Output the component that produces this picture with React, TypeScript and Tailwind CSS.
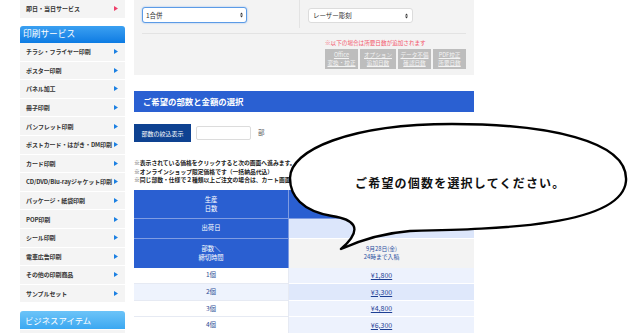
import React from "react";

const sideItems = [
  "チラシ・フライヤー印刷",
  "ポスター印刷",
  "パネル加工",
  "冊子印刷",
  "パンフレット印刷",
  "ポストカード・はがき・DM印刷",
  "カード印刷",
  "CD/DVD/Blu-rayジャケット印刷",
  "パッケージ・紙袋印刷",
  "POP印刷",
  "シール印刷",
  "電車広告印刷",
  "その他の印刷商品",
  "サンプルセット",
];

function Tri({ color }: { color: string }) {
  return (
    <svg width="4" height="5" viewBox="0 0 4 5">
      <path d="M0 0 L4 2.5 L0 5 Z" fill={color} />
    </svg>
  );
}

function UpDown() {
  return (
    <svg width="3" height="6" viewBox="0 0 3 6">
      <path d="M0 2.4 L1.5 0.4 L3 2.4 Z M0 3.6 L1.5 5.6 L3 3.6 Z" fill="#333" />
    </svg>
  );
}

function Select({ text, focused }: { text: string; focused?: boolean }) {
  return (
    <div
      className={
        focused
          ? "flex h-[16px] w-[105px] items-center justify-between rounded-[3px] border-[1.5px] border-[#5b9be6] bg-white pl-[3px] pr-[3px] shadow-[0_0_2px_#8db8ee]"
          : "flex h-[15px] w-[105px] items-center justify-between rounded-[3px] border border-[#dcdcdc] bg-white pl-[4px] pr-[4px]"
      }
    >
      <span className="text-[6.5px] leading-none text-[#333]">{text}</span>
      <UpDown />
    </div>
  );
}

const prices = [
  { n: "1個", p: "¥1,800", l: "bg-white", r: "bg-[#edf2fd]" },
  { n: "2個", p: "¥3,300", l: "bg-[#eef3fd]", r: "bg-[#dfe8fb]" },
  { n: "3個", p: "¥4,800", l: "bg-white", r: "bg-[#edf2fd]" },
  { n: "4個", p: "¥6,300", l: "bg-white", r: "bg-[#edf2fd]" },
];

export default function App() {
  return (
    <div className="relative h-[333px] w-[630px] overflow-hidden bg-white font-['Noto_Sans_CJK_JP','Noto_Sans',sans-serif]">
      <div className="flex pl-[20px]">
        {/* Sidebar */}
        <div className="flex w-[105px] flex-col">
          <div className="flex h-[18px] items-center justify-between bg-[#f4f4f4] pb-[1px] pl-[6px] pr-[7px]">
            <span className="text-[6px] font-bold text-[#333]">即日・当日サービス</span>
            <Tri color="#ee3f6a" />
          </div>
          <div className="mt-[8px] flex h-[17px] items-center rounded-t-[3px] bg-gradient-to-b from-[#3aa0f1] to-[#0a7be3] pl-[3px]">
            <span className="text-[8.7px] leading-none text-white">印刷サービス</span>
          </div>
          {sideItems.map((s) => (
            <div
              key={s}
              className="flex h-[18.6px] items-center justify-between border-b border-white bg-[#f4f4f4] pl-[6px] pr-[7px]"
            >
              <span className="whitespace-nowrap text-[6px] font-bold tracking-[-0.1px] text-[#333]">{s}</span>
              <Tri color="#1c80e2" />
            </div>
          ))}
          <div className="mt-[8px] flex h-[18px] items-center rounded-t-[3px] bg-gradient-to-b from-[#6cc4f8] to-[#3aa8f1] pl-[5px]">
            <span className="text-[8.4px] leading-none text-white">ビジネスアイテム</span>
          </div>
          <div className="mt-[1px] h-[10px] bg-[#f4f4f4]" />
        </div>

        {/* Main */}
        <div className="ml-[9px] flex w-[340px] flex-col">
          <div className="flex h-[75px] flex-col bg-[#f3f3f3]">
            <div className="flex h-[28px]">
              <div className="w-[166px] border-r border-[#e3e3e3] pl-[8px] pt-[7px]">
                <Select text="1合併" focused />
              </div>
              <div className="pl-[8px] pt-[8px]">
                <Select text="レーザー彫刻" />
              </div>
            </div>
            <div className="mx-[8px] mt-[5px] h-px bg-[#e3e3e3]" />
            <div className="ml-[191px] mt-[5px] flex flex-col">
              <div className="text-[5.6px] leading-[8px] text-[#f4566a]">※以下の場合は所要日数が追加されます</div>
              <div className="mt-[2px] flex gap-[2px]">
                {[
                  ["Office", "変換・校正", "w-[33px]"],
                  ["オプション", "追加日数", "w-[36px]"],
                  ["データ不備", "確認日数", "w-[33px]"],
                  ["PDF校正", "所要日数", "w-[33px]"],
                ].map(([a, b, w]) => (
                  <div
                    key={a}
                    className={`${w} flex h-[20px] flex-col items-center justify-center bg-[#bdbdbd] text-[5.6px] leading-[8px] text-[#f4f4f4] underline`}
                  >
                    <span>{a}</span>
                    <span>{b}</span>
                  </div>
                ))}
              </div>
            </div>
          </div>

          <div className="mt-[16px] flex h-[21px] items-center bg-[#2a60d2] pl-[9px]">
            <span className="text-[8.4px] font-bold leading-none text-white">ご希望の部数と金額の選択</span>
          </div>

          <div className="mt-[12px] flex h-[18px] items-center">
            <div className="flex h-[18px] w-[57px] items-center justify-center bg-[#0e4291] text-[6px] text-white">
              部数の絞込表示
            </div>
            <div className="ml-[5px] h-[14px] w-[55px] rounded-[2px] border border-[#dcdcdc] bg-white" />
            <span className="ml-[7px] text-[6.5px] text-[#555]">部</span>
          </div>

          <div className="mt-[17px] flex flex-col text-[5.8px] font-bold leading-[8.5px] text-[#222]">
            <span className="whitespace-nowrap">※表示されている価格をクリックすると次の画面へ進みます。</span>
            <span className="whitespace-nowrap">※オンラインショップ限定価格です（一括納品代込）</span>
            <span className="whitespace-nowrap">※同じ部数・仕様で２種類以上ご注文の場合は、カート画面までお進みください。</span>
          </div>

          <div className="mt-[5px] flex flex-col">
            <div className="flex h-[29px]">
              <div className="flex w-[155px] flex-col items-center justify-center border-b border-r border-[#7f9ce2] bg-[#2a5fd1] text-[6.3px] leading-[9px] text-white">
                <span>生産</span>
                <span>日数</span>
              </div>
              <div className="flex-1 border-b border-[#7f9ce2] bg-[#2a5fd1]" />
            </div>
            <div className="flex h-[20px]">
              <div className="flex w-[155px] items-center justify-center border-b border-r border-[#7f9ce2] bg-[#2a5fd1] text-[6.3px] text-white">
                出荷日
              </div>
              <div className="flex-1 border-b border-white bg-[#dce6fb]" />
            </div>
            <div className="flex h-[29px]">
              <div className="flex w-[155px] flex-col items-center justify-center border-r border-[#7f9ce2] bg-[#2a5fd1] text-[6.3px] leading-[9px] text-white">
                <span>部数＼</span>
                <span>締切時間</span>
              </div>
              <div className="flex flex-1 flex-col items-center justify-center bg-[#f3f3f3] text-[5.8px] leading-[8px] text-[#2a4ea0]">
                <span>9月28日(金)</span>
                <span>24時まで入稿</span>
              </div>
            </div>
            {prices.map((r) => (
              <div key={r.n} className="flex h-[16.6px]">
                <div className={`flex w-[155px] items-center justify-center border-b border-r border-[#e6eaf3] ${r.l} text-[6.5px] text-[#2c4c95]`}>
                  {r.n}
                </div>
                <div className={`flex flex-1 items-center justify-center border-b border-white ${r.r}`}>
                  <span className="text-[7px] text-[#1d3f94] underline">{r.p}</span>
                </div>
              </div>
            ))}
          </div>
        </div>
      </div>

      {/* Speech bubble overlay */}
      <svg className="pointer-events-none absolute left-0 top-0" width="630" height="333" viewBox="0 0 630 333">
        <path
          d="M341 249 C365 238 385 233 410 231 C500 229 622 226 626 181 C629 140 545 124 452 124 C350 124 290 150 290 178 C290 196 302 211 332 216 C352 219 366 227 341 249 Z"
          fill="#ffffff"
          stroke="#000000"
          strokeWidth="2.4"
          strokeLinejoin="round"
        />
      </svg>
      <div className="pointer-events-none absolute left-[355px] top-[175px] whitespace-nowrap text-[12px] font-bold leading-[16px] tracking-[1.2px] text-[#111]">
        ご希望の個数を選択してください。
      </div>
    </div>
  );
}
